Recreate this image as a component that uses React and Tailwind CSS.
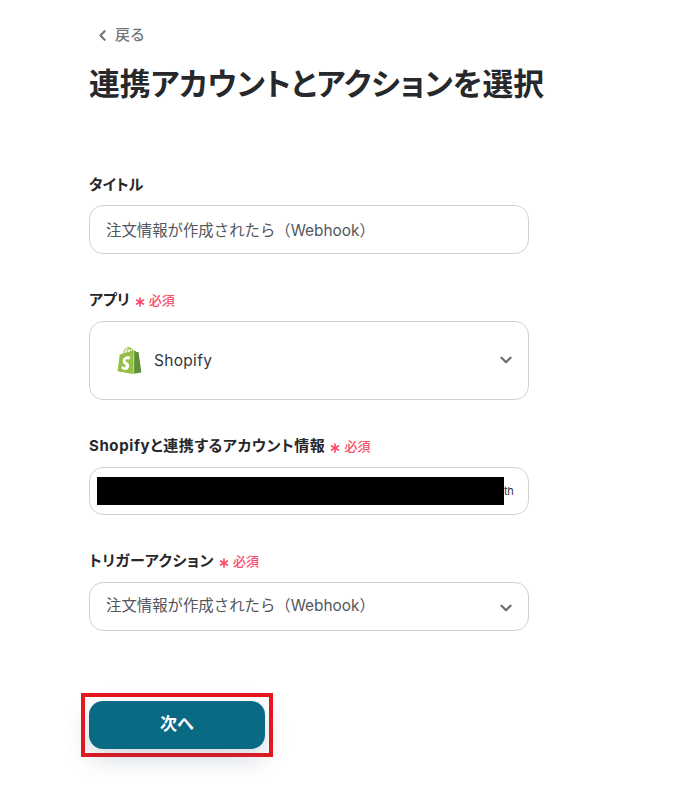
import { ChevronLeft, ChevronDown, Asterisk } from 'lucide-react'
import { SiShopify } from 'react-icons/si'

const FONT = 'font-["Inter","Noto_Sans_CJK_JP",sans-serif]'

function Hissu() {
  return (
    <span className="flex items-center text-[13px] font-medium tracking-normal text-[#f8506c] leading-none mt-[3px]">
      <Asterisk size={16} strokeWidth={2.6} className="ml-[2px] mr-[1px] mt-[3px]" />
      必須
    </span>
  )
}

function Label({ children, required, className }) {
  return (
    <div className={`flex items-center h-[22px] text-[15px] font-bold text-[#27272a] leading-none [font-feature-settings:"palt"] ${className}`}>
      {children}
      {required && <Hissu />}
    </div>
  )
}

function Caja({ children, className }) {
  return (
    <div className={`flex items-center border border-[#cdd2da] rounded-[14px] bg-white ${className}`}>
      {children}
    </div>
  )
}

export default function App() {
  return (
    <div className={`w-[695px] h-[791px] bg-white overflow-hidden pl-[89px] ${FONT}`}>
      <div className="w-[440px]">

        {/* Volver */}
        <div className="flex items-center h-[24px] mt-[23px] pl-[5px] text-[15px] font-medium text-[#71757c]">
          <ChevronLeft size={17} strokeWidth={3} className="mr-[4px]" />
          戻る
        </div>

        <h1 className="mt-[15px] h-[44px] flex items-center text-[30.8px] font-bold text-[#26282b] leading-none whitespace-nowrap [font-feature-settings:'palt']">
          連携アカウントとアクションを選択
        </h1>

        <Label className="mt-[67px]">タイトル</Label>
        <Caja className="mt-[10px] h-[49px] pl-[16px] text-[15.4px] text-[#53565c]">
          <span className="mt-[2px]">注文情報が作成されたら（Webhook）</span>
        </Caja>

        <Label required className="mt-[34px]">アプリ</Label>
        <Caja className="mt-[11px] h-[79px] pl-[27px] pr-[13px] justify-between">
          <div className="flex items-center">
            <span className="relative block w-[25px] h-[28px] text-[#95bf47]">
              <SiShopify size={27} className="absolute -left-[1px] top-0" />
              <SiShopify size={27} className="absolute -left-[1px] top-0 text-[#5e8e3e] [clip-path:polygon(68%_5%,100%_5%,100%_100%,68%_100%)]" />
            </span>
            <span className="ml-[12px] text-[15.5px] text-[#33373d] tracking-[0.3px]">Shopify</span>
          </div>
          <ChevronDown size={18} strokeWidth={3} className="text-[#6b6f75] -mt-[2px]" />
        </Caja>

        <Label required className="mt-[34px] tracking-[0.6px]">Shopifyと連携するアカウント情報</Label>
        <Caja className="mt-[11px] h-[48px] pl-[7px]">
          <div className="w-[407px] h-[28px] bg-black" />
          <span className="text-[11px] text-[#2f3339] tracking-tight leading-none">th</span>
        </Caja>

        <Label required className="mt-[34px] tracking-[0.55px]">トリガーアクション</Label>
        <Caja className="mt-[11px] h-[49px] pl-[16px] pr-[13px] justify-between text-[15.4px] text-[#53565c]">
          <span className="-mt-[1px]">注文情報が作成されたら（Webhook）</span>
          <ChevronDown size={18} strokeWidth={3} className="text-[#6b6f75] mt-[2px]" />
        </Caja>

        {/* Boton con marco rojo */}
        <div className="mt-[62px] -ml-[8px] w-[192px] h-[64px] border-4 border-[#e8171f] p-[4px]">
          <button className="w-full h-full rounded-[14px] bg-[#0b6a83] text-white text-[17px] font-bold shadow-[0_10px_24px_rgba(60,80,110,0.22)]">
            次へ
          </button>
        </div>

      </div>
    </div>
  )
}
